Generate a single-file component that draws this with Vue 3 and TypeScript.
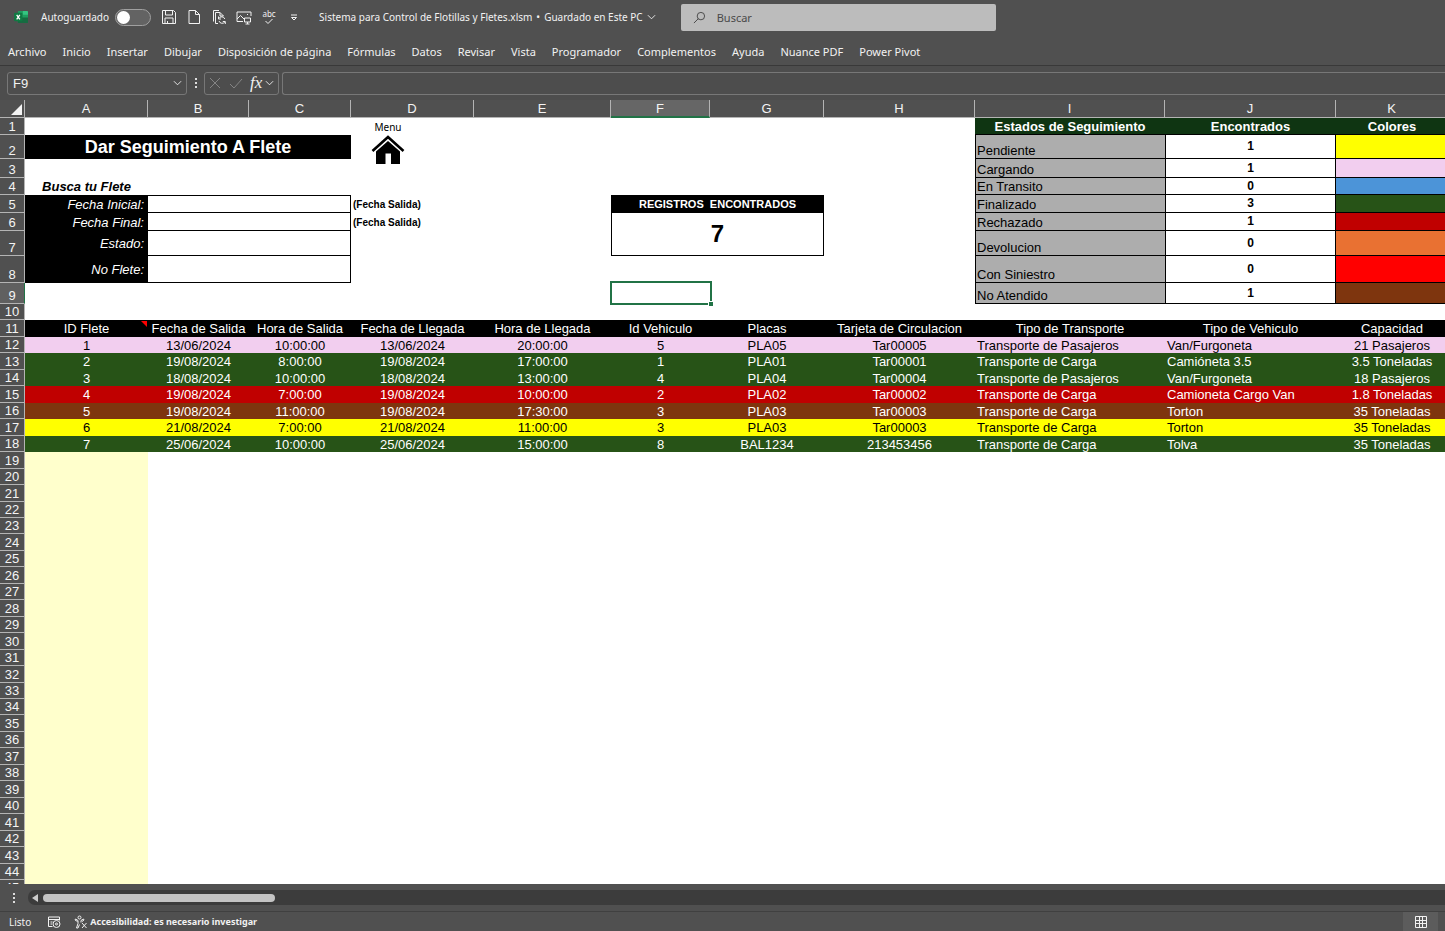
<script setup lang="ts">
import { ref } from 'vue'

const tabs = [
  'Archivo', 'Inicio', 'Insertar', 'Dibujar', 'Disposición de página', 'Fórmulas', 'Datos', 'Revisar',
  'Vista', 'Programador', 'Complementos', 'Ayuda', 'Nuance PDF', 'Power Pivot',
]
const columns = ['A', 'B', 'C', 'D', 'E', 'F', 'G', 'H', 'I', 'J', 'K']

interface TopRow {
  n: number
  field?: string
  note?: string
  status?: string
  count?: number
  tone?: string
}

const topRows: TopRow[] = [
  { n: 1 },
  { n: 2, status: 'Pendiente', count: 1, tone: 'yellow' },
  { n: 3, status: 'Cargando', count: 1, tone: 'pink' },
  { n: 4, status: 'En Transito', count: 0, tone: 'blue' },
  { n: 5, status: 'Finalizado', count: 3, tone: 'green', field: 'Fecha Inicial:', note: '(Fecha Salida)' },
  { n: 6, status: 'Rechazado', count: 1, tone: 'crimson', field: 'Fecha Final:', note: '(Fecha Salida)' },
  { n: 7, status: 'Devolucion', count: 0, tone: 'orange', field: 'Estado:' },
  { n: 8, status: 'Con Siniestro', count: 0, tone: 'red', field: 'No Flete:' },
  { n: 9, status: 'No Atendido', count: 1, tone: 'brown' },
  { n: 10 },
]

const headings = [
  'ID Flete', 'Fecha de Salida', 'Hora de Salida', 'Fecha de Llegada', 'Hora de Llegada', 'Id Vehiculo',
  'Placas', 'Tarjeta de Circulacion', 'Tipo de Transporte', 'Tipo de Vehiculo', 'Capacidad',
]

const trips = [
  { tone: 'pink', cells: ['1', '13/06/2024', '10:00:00', '13/06/2024', '20:00:00', '5', 'PLA05', 'Tar00005', 'Transporte de Pasajeros', 'Van/Furgoneta', '21 Pasajeros'] },
  { tone: 'green', cells: ['2', '19/08/2024', '8:00:00', '19/08/2024', '17:00:00', '1', 'PLA01', 'Tar00001', 'Transporte de Carga', 'Camióneta 3.5', '3.5 Toneladas'] },
  { tone: 'green', cells: ['3', '18/08/2024', '10:00:00', '18/08/2024', '13:00:00', '4', 'PLA04', 'Tar00004', 'Transporte de Pasajeros', 'Van/Furgoneta', '18 Pasajeros'] },
  { tone: 'crimson', cells: ['4', '19/08/2024', '7:00:00', '19/08/2024', '10:00:00', '2', 'PLA02', 'Tar00002', 'Transporte de Carga', 'Camioneta Cargo Van', '1.8 Toneladas'] },
  { tone: 'brown', cells: ['5', '19/08/2024', '11:00:00', '19/08/2024', '17:30:00', '3', 'PLA03', 'Tar00003', 'Transporte de Carga', 'Torton', '35 Toneladas'] },
  { tone: 'yellow', cells: ['6', '21/08/2024', '7:00:00', '21/08/2024', '11:00:00', '3', 'PLA03', 'Tar00003', 'Transporte de Carga', 'Torton', '35 Toneladas'] },
  { tone: 'green', cells: ['7', '25/06/2024', '10:00:00', '25/06/2024', '15:00:00', '8', 'BAL1234', '213453456', 'Transporte de Carga', 'Tolva', '35 Toneladas'] },
]

const emptyRows = Array.from({ length: 27 }, (_, i) => i + 19)

const rowSize = (n: number) => (((n - 12) % 11) % 2 === 1 ? 'tall' : 'short')

const autosave = ref(false)
const cellName = ref('F9')
const formula = ref('')
const search = ref('')
const filters = ref<Record<string, string>>({})
</script>

<template>
  <div class="app">
    <header class="titlebar">
      <svg class="logo" viewBox="0 0 16 14" aria-hidden="true">
        <rect x="4" y="0" width="11" height="13" rx="1" fill="#1f9e5f" />
        <path d="M9.500 0H14a1 1 0 0 1 1 1v3H9.500z" fill="#35c481" />
        <path d="M4 7h11v5a1 1 0 0 1-1 1H5a1 1 0 0 1-1-1z" fill="#176b41" />
        <rect x="0" y="2" width="9" height="9" rx="1" fill="#0f7a43" />
        <path d="M2.800 4.200l3.400 4.800M6.200 4.200L2.800 9" stroke="#fff" stroke-width="1.400" />
      </svg>
      <label class="autosave">
        <span>Autoguardado</span>
        <input v-model="autosave" type="checkbox" role="switch" />
      </label>
      <div class="quick">
        <button type="button" aria-label="Guardar">
          <svg viewBox="0 0 16 16"><path d="M1.500 1.500h11l2 2v11h-13zM4.500 1.500v4.500h7V1.500M4 14.500V9h8v5.500M6.500 12v2.500" /></svg>
        </button>
        <button type="button" aria-label="Nuevo">
          <svg viewBox="0 0 16 16"><path d="M3 1.500h6.500L13.500 5.500v9H3zM9.500 1.500v4h4" /></svg>
        </button>
        <button type="button" aria-label="Actualizar documento">
          <svg viewBox="0 0 16 16"><path d="M2.500 12.500v-11h5.500M7 14.500H4.500V3.500h4.500l3.500 3.500M9 3.500v3.500h3.500M13.800 10a3.300 3.300 0 0 0-6-.5M7.500 7.500v2.500H10M8 12a3.300 3.300 0 0 0 6 .7M14.300 15v-2.500h-2.500" /></svg>
        </button>
        <button type="button" aria-label="Imagen">
          <svg viewBox="0 0 16 16"><path d="M7 12.500H1V3h14v4M1 10l3.500-3.500L8 10M11 5.500h1M8.500 9h6v4h-6zM11.500 13v2M9.500 15h4" /></svg>
        </button>
        <button type="button" aria-label="Ortografía" class="spell">
          <span>abc</span>
          <svg viewBox="0 0 12 7"><path d="M2.500 3l2.500 2.500L9.500 1" /></svg>
        </button>
        <button type="button" aria-label="Personalizar barra">
          <svg viewBox="0 0 16 16"><path d="M5 6h6M5.500 8.500l2.500 2.500L10.500 8.500z" /></svg>
        </button>
      </div>
      <button type="button" class="filename">
        <span>Sistema para Control de Flotillas y Fletes.xlsm</span><span>•</span><span>Guardado en Este PC</span>
        <svg viewBox="0 0 10 6"><path d="M1 1l4 4 4-4" /></svg>
      </button>
      <label class="search">
        <svg viewBox="0 0 14 14"><circle cx="8.500" cy="5.500" r="4" /><path d="M5.700 8.300L1 13" /></svg>
        <input v-model="search" type="search" placeholder="Buscar" aria-label="Buscar" />
      </label>
    </header>

    <nav class="tabs">
      <button v-for="tab in tabs" :key="tab" type="button">{{ tab }}</button>
    </nav>

    <section class="formulabar">
      <div class="namebox">
        <input v-model="cellName" type="text" aria-label="Cuadro de nombres" />
        <button type="button" aria-label="Abrir nombres"><svg viewBox="0 0 10 6"><path d="M1 1l4 4 4-4" /></svg></button>
      </div>
      <span class="dots"><i></i><i></i><i></i></span>
      <div class="fx">
        <button type="button" class="dim" aria-label="Cancelar"><svg viewBox="0 0 14 14"><path d="M2 2l10 10M12 2L2 12" /></svg></button>
        <button type="button" class="dim" aria-label="Introducir"><svg viewBox="0 0 14 14"><path d="M1 8l4 4 8-9" /></svg></button>
        <button type="button" class="fn">fx</button>
        <button type="button" class="more" aria-label="Más funciones"><svg viewBox="0 0 10 6"><path d="M1 1l4 4 4-4" /></svg></button>
      </div>
      <input v-model="formula" class="formula" type="text" aria-label="Barra de fórmulas" />
    </section>

    <main class="sheet">
      <table>
        <colgroup>
          <col class="w-head" />
          <col v-for="c in columns" :key="c" :class="'w-' + c" />
        </colgroup>
        <thead>
          <tr>
            <th class="corner"><svg viewBox="0 0 11 11"><path d="M11 0v11H0z" /></svg></th>
            <th v-for="c in columns" :key="c" scope="col" :class="{ active: c === 'F' }">{{ c }}</th>
          </tr>
        </thead>
        <tbody>
          <tr v-for="row in topRows" :key="row.n" :class="'r' + row.n">
            <th scope="row" :class="{ active: row.n === 9 }">{{ row.n }}</th>

            <template v-if="row.field">
              <td class="field"><label :for="'filter-' + row.n">{{ row.field }}</label></td>
              <td colspan="2" class="entry"><input :id="'filter-' + row.n" v-model="filters[row.field]" type="text" /></td>
              <td class="note">{{ row.note }}</td>
            </template>
            <template v-else-if="row.n === 2">
              <td colspan="3" class="title">Dar Seguimiento A Flete</td>
              <td></td>
            </template>
            <template v-else>
              <td :class="{ hint: row.n === 4 }">{{ row.n === 4 ? 'Busca tu Flete' : '' }}</td>
              <td></td>
              <td></td>
              <td class="anchor">
                <a v-if="row.n === 1" class="menu" href="#menu">
                  <span>Menu</span>
                  <svg viewBox="0 0 34 30">
                    <path d="M1.500 16L17 2l15.500 14" fill="none" stroke="#000" stroke-width="2.600" />
                    <path d="M5 16.500L17 6l12 10.500V29h-9V18.500h-5.500V29H5z" />
                  </svg>
                </a>
              </td>
            </template>

            <td></td>
            <td v-if="row.n === 5" colspan="2" class="found-title">REGISTROS&nbsp; ENCONTRADOS</td>
            <td v-else-if="row.n === 6" colspan="2" rowspan="2" class="found">7</td>
            <template v-else-if="row.n !== 7">
              <td class="anchor"><span v-if="row.n === 9" class="selection"></span></td>
              <td></td>
            </template>
            <td></td>

            <template v-if="row.n === 1">
              <td class="legend-head">Estados de Seguimiento</td>
              <td class="legend-head">Encontrados</td>
              <td class="legend-head">Colores</td>
            </template>
            <template v-else-if="row.status">
              <td class="status">{{ row.status }}</td>
              <td class="count">{{ row.count }}</td>
              <td class="swatch" :class="row.tone"></td>
            </template>
            <template v-else>
              <td></td>
              <td></td>
              <td></td>
            </template>
          </tr>

          <tr class="headings">
            <th scope="row">11</th>
            <td v-for="(h, i) in headings" :key="h" class="anchor">{{ h }}<span v-if="i === 0" class="comment"></span></td>
          </tr>
          <tr v-for="(trip, i) in trips" :key="i" class="trip" :class="rowSize(i + 12)">
            <th scope="row">{{ i + 12 }}</th>
            <td v-for="(cell, j) in trip.cells" :key="j" :class="[trip.tone, { start: j === 8 || j === 9 }]">{{ cell }}</td>
          </tr>
          <tr v-for="n in emptyRows" :key="n" :class="rowSize(n)">
            <th scope="row">{{ n }}</th>
            <td class="cream"></td>
            <td colspan="10"></td>
          </tr>
        </tbody>
      </table>
    </main>

    <div class="scroller">
      <span class="dots"><i></i><i></i><i></i></span>
      <div class="track">
        <button type="button" aria-label="Desplazar a la izquierda"><svg viewBox="0 0 6 8"><path d="M6 0v8L0 4z" /></svg></button>
        <span class="thumb"></span>
      </div>
    </div>

    <footer class="statusbar">
      <span>Listo</span>
      <button type="button" aria-label="Grabar macro">
        <svg viewBox="0 0 14 14"><path d="M5.500 11.500H1.500V2h11v3.500M1.500 4.500h11M3.500 7h2M3.500 9h1.500" /><circle cx="9.500" cy="9" r="3.500" /><circle cx="9.500" cy="9" r="1" /></svg>
      </button>
      <button type="button" class="access">
        <svg viewBox="0 0 14 14"><circle cx="5.500" cy="2.500" r="1.500" /><path d="M1.500 4l2.500 1.500v3L2.500 13H4l1.500-3.500M9.500 4L7 5.500v2M1.500 4l-.5 1 2.500 1.500M9.500 4l.5 1L8 6.500M8 8l4.500 5M12.500 8L8 13" /></svg>
        <span>Accesibilidad: es necesario investigar</span>
      </button>
      <button type="button" class="view" aria-label="Vista normal">
        <svg viewBox="0 0 12 12"><path d="M.5 .5h11v11H.5zM.5 4.500h11M.5 7.500h11M4.500 .5v11M7.500 .5v11" /></svg>
      </button>
    </footer>
  </div>
</template>

<style>
body {
  margin: 0;
  overflow: hidden;
}
</style>

<style scoped>
.app {
  display: flex;
  flex-direction: column;
  height: 100vh;
  background: #505050;
  color: #f2f2f2;
  font-family: "Noto Sans", "Open Sans", sans-serif;
  font-size: 11px;
}
button {
  padding: 0;
  border: 0;
  background: none;
  color: inherit;
  font: inherit;
  white-space: nowrap;
}
input {
  box-sizing: border-box;
  min-width: 0;
  border: 0;
  outline: 0;
  background: none;
  color: inherit;
  font: inherit;
}
svg {
  display: block;
  fill: none;
  stroke: currentColor;
}

.titlebar {
  display: flex;
  align-items: center;
  height: 34px;
  flex: none;
  padding-left: 14px;
}
.logo {
  width: 15px;
  height: 13px;
  stroke: none;
}
.autosave {
  display: flex;
  align-items: center;
  gap: 6px;
  margin-left: 12px;
  font-size: 10px;
}
.autosave input {
  appearance: none;
  width: 36px;
  height: 17px;
  margin: 0;
  padding: 1px;
  border: 1px solid #a0a0a0;
  border-radius: 9px;
  background: #636363;
}
.autosave input::before {
  content: "";
  display: block;
  width: 13px;
  height: 13px;
  border-radius: 50%;
  background: #fff;
}
.autosave input:checked::before {
  margin-left: auto;
}
.quick {
  display: flex;
  align-items: center;
  gap: 9px;
  margin-left: 10px;
}
.quick svg {
  width: 16px;
  height: 16px;
}
.quick .spell {
  display: flex;
  flex-direction: column;
  align-items: center;
  width: 16px;
  font-size: 8px;
  line-height: 8px;
}
.quick .spell svg {
  width: 12px;
  height: 7px;
}
.filename {
  display: flex;
  align-items: center;
  gap: 4px;
  margin-left: 17px;
  font-size: 10px;
}
.filename svg {
  width: 9px;
  height: 6px;
}
.search {
  display: flex;
  align-items: center;
  gap: 11px;
  box-sizing: border-box;
  width: 22%;
  height: 27px;
  margin-left: 25px;
  padding-left: 12px;
  border-radius: 2px;
  background: #bcbcbc;
  color: #444;
}
.search svg {
  width: 13px;
  height: 13px;
}
.search input {
  flex: 1;
  padding: 0;
}
.search input::placeholder {
  color: #4a4a4a;
}

.tabs {
  display: flex;
  gap: 16px;
  flex: none;
  height: 31px;
  padding-left: 8px;
  border-bottom: 1px solid #393939;
}
.tabs button {
  height: 35px;
}

.formulabar {
  display: flex;
  align-items: center;
  flex: none;
  height: 34px;
  padding-left: 7px;
  background: #4d4d4d;
}
.namebox,
.fx,
.formula {
  display: flex;
  align-items: center;
  box-sizing: border-box;
  height: 23px;
  border: 1px solid #777;
  border-radius: 3px;
}
.namebox {
  width: 180px;
  padding: 0 4px 0 5px;
  font-family: "Liberation Sans", Arial, sans-serif;
  font-size: 13px;
}
.namebox input {
  flex: 1;
  padding: 0;
}
.namebox svg {
  width: 9px;
  height: 6px;
}
.dots {
  display: grid;
  justify-items: center;
  gap: 2px;
  width: 17px;
}
.dots i {
  width: 2px;
  height: 2px;
  background: #ddd;
}
.fx {
  gap: 7px;
  width: 75px;
  padding: 0 3px;
}
.fx svg {
  width: 14px;
  height: 14px;
}
.fx .more svg {
  width: 9px;
  height: 6px;
}
.fx .more {
  margin-left: -4px;
}
.fx .dim {
  color: #858585;
}
.fx .fn {
  font-family: "Liberation Serif", serif;
  font-size: 17px;
  font-style: italic;
  line-height: 20px;
}
.formula {
  flex: 1;
  margin-left: 3px;
  border-right: 0;
  border-radius: 3px 0 0 3px;
}

.sheet {
  flex: 1;
  min-height: 0;
  overflow: hidden;
  background: linear-gradient(#505050 18px, #fff 18px);
}
table {
  width: 1448px;
  border-spacing: 0;
  table-layout: fixed;
  color: #000;
  font-family: "Liberation Sans", Arial, sans-serif;
  font-size: 13px;
  line-height: 15px;
}
.w-head { width: 25px; }
.w-A { width: 123px; }
.w-B { width: 101px; }
.w-C { width: 102px; }
.w-D { width: 123px; }
.w-E { width: 137px; }
.w-F { width: 99px; }
.w-G { width: 114px; }
.w-H { width: 151px; }
.w-I { width: 190px; }
.w-J { width: 171px; }
.w-K { width: 112px; }

td,
th {
  box-sizing: border-box;
  padding: 0;
  white-space: nowrap;
}
th {
  border-right: 1px solid #b4b4b4;
  border-bottom: 1px solid #b4b4b4;
  background: #505050;
  color: #f4f4f4;
  font-weight: 400;
  text-align: center;
}
thead th {
  height: 18px;
}
thead th.active {
  border-bottom: 2px solid #217346;
  background: #666;
}
tbody th {
  vertical-align: bottom;
  line-height: 14px;
}
tbody th.active {
  border-right-color: #217346;
  background: #606060;
}
.corner svg {
  width: 11px;
  height: 11px;
  margin: 2px 2px 0 auto;
  fill: #f4f4f4;
  stroke: none;
}
.r1, .r4, .headings, .tall { height: 17px; }
.r2 { height: 24px; }
.r3 { height: 19px; }
.r5, .r6 { height: 18px; }
.r7 { height: 25px; }
.r8 { height: 27px; }
.r9 { height: 21px; }
.r10, .short { height: 16px; }

.anchor {
  position: relative;
}
.title {
  background: #000;
  color: #fff;
  font-size: 18px;
  font-weight: 700;
  line-height: 20px;
  text-align: center;
}
.hint {
  font-weight: 700;
  font-style: italic;
  text-align: center;
}
.field {
  padding-right: 4px;
  background: #000;
  color: #fff;
  font-style: italic;
  text-align: right;
}
.entry {
  border-right: 1px solid #000;
  border-bottom: 1px solid #000;
}
.r5 .entry {
  border-top: 1px solid #000;
}
.entry input {
  display: block;
  width: 100%;
  height: 15px;
  padding: 0 3px;
}
.note {
  padding-left: 2px;
  font-size: 10px;
  font-weight: 700;
}
.menu {
  position: absolute;
  top: 2px;
  left: 20px;
  display: grid;
  justify-items: center;
  gap: 1px;
  color: #000;
  font-family: "Noto Sans", "Open Sans", sans-serif;
  font-size: 10px;
  line-height: 14px;
  text-decoration: none;
}
.menu svg {
  width: 34px;
  height: 30px;
  fill: #000;
  stroke: none;
}
.found-title {
  background: #000;
  color: #fff;
  font-size: 11px;
  font-weight: 700;
  text-align: center;
}
.found {
  border: 1px solid #000;
  border-top: 0;
  font-size: 24px;
  font-weight: 700;
  line-height: 28px;
  text-align: center;
}
.selection {
  position: absolute;
  inset: -2px -2px -1px -1px;
  border: 2px solid #217346;
}
.selection::after {
  content: "";
  position: absolute;
  right: -3px;
  bottom: -3px;
  width: 4px;
  height: 4px;
  border: 1px solid #fff;
  border-width: 1px 0 0 1px;
  background: #217346;
}
.legend-head {
  border-bottom: 1px solid #000;
  background: #0f3512;
  color: #fff;
  font-weight: 700;
  text-align: center;
}
.status {
  padding-left: 1px;
  border-bottom: 1px solid #000;
  border-left: 1px solid #000;
  background: #adadad;
  line-height: 14px;
  vertical-align: bottom;
}
.count {
  border: 1px solid #000;
  border-top: 0;
  font-size: 12px;
  font-weight: 700;
  text-align: center;
}
.swatch {
  border-bottom: 1px solid #000;
}
.headings td {
  background: #000;
  color: #fff;
  text-align: center;
}
.comment {
  position: absolute;
  top: 1px;
  right: 1px;
  border: 3px solid #f00;
  border-bottom-color: transparent;
  border-left-color: transparent;
}
.trip td {
  text-align: center;
}
.trip td.start {
  padding-left: 2px;
  text-align: left;
}
.yellow { background: #ff0; }
.pink { background: #f2ceef; }
.blue { background: #4c94d8; }
.green { background: #275317; color: #fff; }
.crimson { background: #c00000; color: #fff; }
.orange { background: #e97132; }
.red { background: #f00; }
.brown { background: #7e350e; color: #fff; }
.cream { background: #ffffcc; }

.scroller {
  display: flex;
  align-items: center;
  flex: none;
  gap: 6px;
  height: 27px;
  padding-left: 5px;
  border-bottom: 1px solid #404040;
}
.track {
  display: flex;
  align-items: center;
  gap: 5px;
  flex: 1;
  height: 15px;
  padding-left: 4px;
  border-radius: 7px 0 0 7px;
  background: #3c3c3c;
}
.track svg {
  width: 6px;
  height: 8px;
  fill: #ccc;
  stroke: none;
}
.thumb {
  width: 16.400%;
  height: 8px;
  border-radius: 4px;
  background: #c4c4c4;
}
.statusbar {
  display: flex;
  align-items: center;
  flex: none;
  height: 19px;
  padding-left: 9px;
  font-size: 10px;
}
.statusbar svg {
  width: 14px;
  height: 14px;
}
.statusbar > button {
  margin-left: 16px;
}
.statusbar .access {
  display: flex;
  align-items: center;
  gap: 2px;
  margin-left: 13px;
  font-size: 9px;
  font-weight: 700;
}
.statusbar .view {
  display: grid;
  place-items: center;
  width: 35px;
  height: 19px;
  margin-left: auto;
  margin-right: 7px;
  background: #5c5c5c;
}
.statusbar .view svg {
  width: 12px;
  height: 12px;
}
</style>
